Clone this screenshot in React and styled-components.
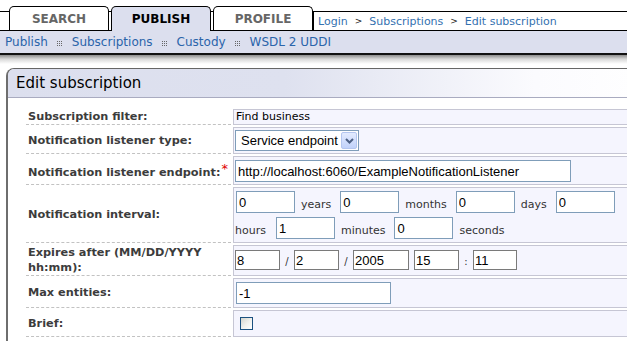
import React from "react";
import styled, { createGlobalStyle } from "styled-components";

const Global = createGlobalStyle`
  html, body { margin: 0; padding: 0; background: #fff; overflow: hidden; }
  body { font-family: "DejaVu Sans", Verdana, sans-serif; color: #000; }
  * { box-sizing: border-box; }
`;

const Page = styled.div`
  width: 627px;
  overflow: hidden;
`;

const TabRow = styled.div`
  display: flex;
  align-items: flex-end;
  height: 31px;
  padding-left: 9px;
  border-bottom: 1px solid #000;
  background: linear-gradient(#000, #000) 0 11px / 100% 1px no-repeat;
`;

const TabGroup = styled.div`
  display: flex;
  align-items: flex-end;
  gap: 2px;
`;

const Tab = styled.div`
  width: 100px;
  height: ${(p) => (p.$active ? "25px" : "24px")};
  margin-bottom: ${(p) => (p.$active ? "-1px" : "0")};
  border: 1px solid #000;
  border-bottom: none;
  border-radius: 5px 5px 0 0;
  background: ${(p) => (p.$active ? "#dcdfee" : "#fff")};
  color: ${(p) => (p.$active ? "#000" : "#666")};
  font-weight: bold;
  font-size: 12px;
  display: flex;
  align-items: center;
  justify-content: center;
  padding-bottom: ${(p) => (p.$active ? "1px" : "0")};
`;

const Breadcrumb = styled.div`
  flex: 1;
  height: 18px;
  border-left: 1px solid #000;
  padding-left: 4px;
  display: flex;
  align-items: center;
  font-size: 11px;
  color: #3471b0;
  white-space: nowrap;
`;

const CrumbSep = styled.span`
  color: #222;
  font-size: 9px;
  margin: 0 7px 0 7px;
`;

const NavBar = styled.div`
  height: 24px;
  background: #dcdfee;
  border-bottom: 2px solid #111;
  padding-left: 5px;
  display: flex;
  align-items: center;
  font-size: 12px;
  color: #2a64aa;
  white-space: nowrap;
`;

const NavSep = styled.svg`
  width: 5px;
  height: 5px;
  margin: 2px 10px 0 9px;
  flex: none;
`;

const NavShadow = styled.div`
  height: 9px;
  background: linear-gradient(#8c8c8c, #d8d8d8 45%, #fff);
`;

const Panel = styled.section`
  margin: 4px -40px 0 6px;
  border-top: 1px solid #666;
  border-left: 2px solid #6e6e6e;
  border-top-left-radius: 8px;
`;

const PanelHeader = styled.div`
  height: 29px;
  padding-left: 8px;
  display: flex;
  align-items: center;
  border-bottom: 1px solid #a9abc0;
  border-top-left-radius: 6px;
  background: linear-gradient(90deg, #dcdfee 0%, #dee1ef 42%, #fbfbfe 80%, #fff 100%);
  font-size: 15px;
  color: #000;
`;

const PanelBody = styled.div`
  padding: 11px 0 10px 18px;
`;

const FormGrid = styled.div`
  display: grid;
  grid-template-columns: 205px 1fr;
  gap: 2px;
`;

const LabelCell = styled.div`
  display: flex;
  align-items: center;
  padding-left: 2px;
  border-bottom: 1px dashed #c2c2c2;
  font-size: 11.3px;
  font-weight: bold;
  line-height: 15px;
  color: #3c3c3c;
`;

const Required = styled.span`
  color: #e00000;
  font-size: 13px;
  font-weight: normal;
  vertical-align: 3px;
  margin-left: 1px;
`;

const ValueCell = styled.div`
  background: #f5f5fe;
  border: 1px solid #c6c6d4;
  border-right: none;
  padding: ${(p) => p.$pad || "2px 1px"};
  font-size: 11px;
  line-height: 14px;
  color: #000;
`;

const TextInput = styled.input`
  display: block;
  flex: none;
  width: ${(p) => p.$w}px;
  height: ${(p) => p.$h || 22}px;
  margin: 0 0 0 ${(p) => p.$ml || 0}px;
  padding: 0 ${(p) => (p.$plain ? 1 : 2)}px;
  border: 1px solid ${(p) => (p.$plain ? "#7a7a7a" : "#7f9db9")};
  border-radius: 0;
  background: #fff;
  font-family: "Liberation Sans", Arial, sans-serif;
  font-size: 13px;
  color: #000;
  outline: none;
`;

const FakeSelect = styled.div`
  width: 124px;
  height: 21px;
  border: 1px solid #7f9db9;
  background: #fff;
  padding: 1px;
  display: flex;
  align-items: center;
  justify-content: space-between;
  font-family: "Liberation Sans", Arial, sans-serif;
  font-size: 13px;
`;

const SelectText = styled.span`
  padding-left: 4px;
  white-space: nowrap;
`;

const SelectButton = styled.span`
  width: 16px;
  height: 17px;
  border: 1px solid #b4c6ef;
  border-radius: 2px;
  background: linear-gradient(#e3ebfe, #c1d2fa);
  display: flex;
  align-items: center;
  justify-content: center;
`;

const InputLine = styled.div`
  display: flex;
  align-items: flex-end;
  & + & {
    margin-top: 4px;
  }
`;

const Unit = styled.span`
  font-size: 11px;
  line-height: 13px;
  color: #333;
  margin: 0 9px 2px 6px;
  white-space: nowrap;
  &:first-child {
    margin-left: 0;
    margin-right: 10px;
  }
`;

const DateLine = styled.div`
  display: flex;
  align-items: center;
`;

const DateSep = styled.span`
  font-size: 10px;
  line-height: 12px;
  padding-top: 3px;
  color: #333;
  width: ${(p) => p.$w || 14}px;
  text-align: center;
  flex: none;
`;

const Checkbox = styled.input`
  appearance: none;
  display: block;
  width: 13px;
  height: 13px;
  margin: 0;
  border: 1px solid #1c5180;
  background: linear-gradient(135deg, #d4d4ce 0%, #f2f2ef 55%, #fff 100%);
`;

const navItems = ["Publish", "Subscriptions", "Custody", "WSDL 2 UDDI"];

function Dots() {
  const pts = [0, 2, 4];
  return (
    <NavSep viewBox="0 0 5 5">
      {pts.map((y) =>
        pts.map((x) => <rect key={`${x}-${y}`} x={x} y={y} width="1" height="1" fill="#666" />)
      )}
    </NavSep>
  );
}

export default function App() {
  return (
    <Page>
      <Global />
      <TabRow>
        <TabGroup>
          <Tab>SEARCH</Tab>
          <Tab $active>PUBLISH</Tab>
          <Tab>PROFILE</Tab>
        </TabGroup>
        <Breadcrumb>
          <span>Login</span>
          <CrumbSep>&gt;</CrumbSep>
          <span>Subscriptions</span>
          <CrumbSep>&gt;</CrumbSep>
          <span>Edit subscription</span>
        </Breadcrumb>
      </TabRow>
      <NavBar>
        {navItems.map((n, i) => (
          <React.Fragment key={n}>
            {i > 0 && <Dots />}
            <span>{n}</span>
          </React.Fragment>
        ))}
      </NavBar>
      <NavShadow />
      <Panel>
        <PanelHeader>Edit subscription</PanelHeader>
        <PanelBody>
          <FormGrid>
            <LabelCell>Subscription filter:</LabelCell>
            <ValueCell $pad="0 2px">Find business</ValueCell>

            <LabelCell>Notification listener type:</LabelCell>
            <ValueCell $pad="2px 1px">
              <FakeSelect role="combobox">
                <SelectText>Service endpoint</SelectText>
                <SelectButton>
                  <svg width="9" height="6" viewBox="0 0 9 6">
                    <path d="M1 1 L4.5 4.5 L8 1" fill="none" stroke="#4d6185" strokeWidth="2" />
                  </svg>
                </SelectButton>
              </FakeSelect>
            </ValueCell>

            <LabelCell>
              <span>
                Notification listener endpoint:<Required>*</Required>
              </span>
            </LabelCell>
            <ValueCell $pad="3px 1px 2px">
              <TextInput $w={336} defaultValue="http://localhost:6060/ExampleNotificationListener" />
            </ValueCell>

            <LabelCell>Notification interval:</LabelCell>
            <ValueCell $pad="3px 1px 3px">
              <InputLine>
                <TextInput $w={59} $ml={1} defaultValue="0" />
                <Unit>years</Unit>
                <TextInput $w={59} defaultValue="0" />
                <Unit>months</Unit>
                <TextInput $w={59} defaultValue="0" />
                <Unit>days</Unit>
                <TextInput $w={59} defaultValue="0" />
              </InputLine>
              <InputLine>
                <Unit>hours</Unit>
                <TextInput $w={59} defaultValue="1" />
                <Unit>minutes</Unit>
                <TextInput $w={59} defaultValue="0" />
                <Unit>seconds</Unit>
              </InputLine>
            </ValueCell>

            <LabelCell>Expires after (MM/DD/YYYY hh:mm):</LabelCell>
            <ValueCell $pad="4px 1px 5px">
              <DateLine>
                <TextInput $plain $w={45} $h={20} defaultValue="8" />
                <DateSep>/</DateSep>
                <TextInput $plain $w={45} $h={20} defaultValue="2" />
                <DateSep>/</DateSep>
                <TextInput $plain $w={56} $h={20} defaultValue="2005" />
                <DateSep $w={5} />
                <TextInput $plain $w={45} $h={20} defaultValue="15" />
                <DateSep>:</DateSep>
                <TextInput $plain $w={44} $h={20} defaultValue="11" />
              </DateLine>
            </ValueCell>

            <LabelCell>Max entities:</LabelCell>
            <ValueCell $pad="3px 1px 3px 2px">
              <TextInput $w={155} defaultValue="-1" />
            </ValueCell>

            <LabelCell>Brief:</LabelCell>
            <ValueCell $pad="6px 1px 6px 6px">
              <Checkbox type="checkbox" />
            </ValueCell>
          </FormGrid>
        </PanelBody>
      </Panel>
    </Page>
  );
}
